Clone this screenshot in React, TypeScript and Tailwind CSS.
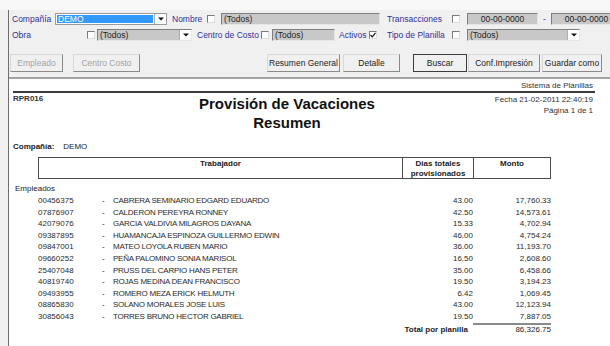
import React from "react";

const rows = [
  { code: "00456375", name: "CABRERA SEMINARIO EDGARD EDUARDO", days: "43.00", monto: "17,760.33" },
  { code: "07876907", name: "CALDERON PEREYRA RONNEY", days: "42.50", monto: "14,573.61" },
  { code: "42079076", name: "GARCIA VALDIVIA MILAGROS DAYANA", days: "15.33", monto: "4,702.94" },
  { code: "09387895", name: "HUAMANCAJA ESPINOZA GUILLERMO EDWIN", days: "46.00", monto: "4,754.24" },
  { code: "09847001", name: "MATEO LOYOLA RUBEN MARIO", days: "36.00", monto: "11,193.70" },
  { code: "09660252", name: "PEÑA PALOMINO SONIA MARISOL", days: "16.50", monto: "2,608.60" },
  { code: "25407048", name: "PRUSS DEL CARPIO HANS PETER", days: "35.00", monto: "6,458.66" },
  { code: "40819740", name: "ROJAS MEDINA DEAN FRANCISCO", days: "19.50", monto: "3,194.23" },
  { code: "09493955", name: "ROMERO MEZA ERICK HELMUTH", days: "6.42", monto: "1,069.45" },
  { code: "08865830", name: "SOLANO MORALES JOSE LUIS", days: "43.00", monto: "12,123.94" },
  { code: "30856043", name: "TORRES BRUNO HECTOR GABRIEL", days: "19.50", monto: "7,887.05" },
];

function Check({ checked = false }: { checked?: boolean }) {
  return (
    <span className="w-[8px] h-[8px] shrink-0 bg-white border border-t-[#7a7a7a] border-l-[#7a7a7a] border-b-[#dcdcdc] border-r-[#dcdcdc] flex items-center justify-center">
      {checked && (
        <svg width="6" height="6" viewBox="0 0 6 6">
          <path d="M0.5 3 L2.3 4.8 L5.5 0.8" stroke="#111" strokeWidth="1.2" fill="none" />
        </svg>
      )}
    </span>
  );
}

function Arrow() {
  return (
    <span className="w-[12px] h-full shrink-0 bg-white border-l border-[#b0b0b0] flex items-center justify-center">
      <svg width="6" height="4" viewBox="0 0 6 4">
        <path d="M0 0.5 H6 L3 3.5 Z" fill="#111" />
      </svg>
    </span>
  );
}

function Field({ text, className, center = false }: { text: string; className: string; center?: boolean }) {
  return (
    <span
      className={`h-full shrink-0 bg-[#c8c8c8] border border-t-[#7e7e7e] border-l-[#7e7e7e] border-b-[#e6e6e6] border-r-[#e6e6e6] text-[#222] flex items-center px-[2px] ${center ? "justify-center" : ""} ${className}`}
    >
      {text}
    </span>
  );
}

function Btn({ label, className, disabled = false, strong = false }: { label: string; className: string; disabled?: boolean; strong?: boolean }) {
  return (
    <span
      className={`h-full shrink-0 flex items-center justify-center bg-[#f0f0f0] border ${
        strong ? "border-[#3c3c3c]" : "border-t-[#d8d8d8] border-l-[#d8d8d8] border-b-[#8a8a8a] border-r-[#8a8a8a]"
      } ${disabled ? "text-[#a3a3a3]" : "text-[#222]"} ${className}`}
    >
      {label}
    </span>
  );
}

export default function App() {
  const lbl = "text-[#30309a] shrink-0";
  return (
    <div
      className="w-[610px] h-[346px] overflow-hidden bg-[#f0f0f0] flex flex-col"
      style={{ fontFamily: '"Liberation Sans", Arial, sans-serif' }}
    >
      <div className="h-[10px] bg-[#f8f8f8] shrink-0" />
      <div className="ml-[8px] border-l border-[#6e6e6e] flex-1 flex flex-col text-[8.5px] leading-none">
        {/* fila 1 */}
        <div className="mt-[3px] h-[12px] flex items-center">
          <span className={`${lbl} w-[46px] pl-[3px]`}>Compañía</span>
          <span className="w-[112px] h-full shrink-0 flex bg-white border border-[#9a9a9a]">
            <span className="flex-1 m-[1px] bg-[#3399ff] text-white flex items-center px-[1px]">DEMO</span>
            <Arrow />
          </span>
          <span className={`${lbl} ml-[5px] w-[35px]`}>Nombre</span>
          <Check />
          <Field text="(Todos)" className="ml-[6px] w-[159px]" />
          <span className={`${lbl} ml-[7px] w-[65px]`}>Transacciones</span>
          <Check />
          <Field text="00-00-0000" className="ml-[7px] w-[71px]" center />
          <span className="w-[13px] shrink-0 text-center text-[#30309a]">-</span>
          <Field text="00-00-0000" className="w-[71px]" center />
        </div>
        {/* fila 2 */}
        <div className="mt-[4px] h-[12px] flex items-center">
          <span className={`${lbl} w-[78px] pl-[3px]`}>Obra</span>
          <Check />
          <span className="ml-[2px] w-[95px] h-full shrink-0 flex bg-[#c8c8c8] border border-t-[#7e7e7e] border-l-[#7e7e7e] border-b-[#e6e6e6] border-r-[#e6e6e6]">
            <span className="flex-1 flex items-center px-[2px] text-[#222]">(Todos)</span>
            <Arrow />
          </span>
          <span className={`${lbl} ml-[5px] w-[64px]`}>Centro de Costo</span>
          <Check />
          <Field text="(Todos)" className="ml-[3px] w-[63px]" />
          <span className={`${lbl} ml-[4px] w-[30px]`}>Activos</span>
          <Check checked />
          <span className={`${lbl} ml-[10px] w-[65px]`}>Tipo de Planilla</span>
          <Check />
          <span className="ml-[7px] w-[113px] h-full shrink-0 flex bg-[#c8c8c8] border border-t-[#7e7e7e] border-l-[#7e7e7e] border-b-[#e6e6e6] border-r-[#e6e6e6]">
            <span className="flex-1 flex items-center px-[2px] text-[#222]">(Todos)</span>
            <Arrow />
          </span>
        </div>
        {/* botones */}
        <div className="mt-[13px] h-[18px] flex items-center">
          <Btn label="Empleado" className="ml-[1px] w-[53px]" disabled />
          <Btn label="Centro Costo" className="ml-[10px] w-[67px]" disabled />
          <Btn label="Resumen General" className="ml-[127px] w-[73px]" />
          <Btn label="Detalle" className="ml-[3px] w-[57px]" />
          <Btn label="Buscar" className="ml-[13px] w-[54px]" strong />
          <Btn label="Conf.Impresión" className="ml-[1px] w-[72px]" />
          <Btn label="Guardar como" className="ml-[2px] w-[60px]" />
        </div>

        {/* reporte */}
        <div className="mt-[5px] flex-1 bg-white border-t-2 border-[#a4a4a4] text-[8px] text-[#222]">
          <div className="pt-[1px] h-[12px] leading-[11px] text-right pr-[17px] text-[#333]">Sistema de Planillas</div>
          <div className="ml-[4px] mr-[15px] h-[2px] bg-[#3a3a3a]" />
          <div className="mt-[1px] flex">
            <div className="w-[178px] pl-[4px] leading-[10px] font-bold text-[#333]">RPR016</div>
            <div className="w-[200px] text-center text-[15px] leading-[19px] font-bold text-[#111]">
              <div>Provisión de Vacaciones</div>
              <div>Resumen</div>
            </div>
            <div className="flex-1 text-right pr-[17px] leading-[10px] text-[#333]">
              <div className="pt-[1px]">Fecha 21-02-2011 22:40:19</div>
              <div className="mt-[1px]">Página 1 de 1</div>
            </div>
          </div>
          <div className="mt-[10px] h-[10px] leading-[10px] flex pl-[4px]">
            <span className="font-bold">Compañía:</span>
            <span className="ml-[9px]">DEMO</span>
          </div>
          <div className="mt-[5px] ml-[29px] w-[513px] h-[22px] border border-[#4a4a4a] flex font-bold leading-[10px]">
            <div className="w-[364px] border-r border-[#4a4a4a] text-center pt-[1px]">Trabajador</div>
            <div className="w-[71px] border-r border-[#4a4a4a] text-center pt-[1px]">
              <div>Dias totales</div>
              <div>provisionados</div>
            </div>
            <div className="flex-1 text-center pt-[1px]">Monto</div>
          </div>
          <div className="mt-[5px] pl-[6px] leading-[10px]">Empleados</div>
          <div className="mt-[1px]">
            {rows.map((r) => (
              <div key={r.code} className="ml-[29px] h-[11.6px] leading-[11.6px] flex text-[#2a2a2a]">
                <span className="w-[64px] shrink-0">{r.code}</span>
                <span className="w-[11px] shrink-0">-</span>
                <span className="w-[289px] shrink-0 tracking-[-0.25px] whitespace-nowrap">{r.name}</span>
                <span className="w-[71px] shrink-0 text-right">{r.days}</span>
                <span className="w-[78px] shrink-0 text-right">{r.monto}</span>
              </div>
            ))}
            <div className="ml-[29px] h-[13px] flex">
              <span className="w-[435px] shrink-0 text-right pr-[5px] pt-[2px] leading-[10px] font-bold">Total por planilla</span>
              <span className="w-[78px] shrink-0 text-right border-t-2 border-[#8a8a8a] leading-[10px]">86,326.75</span>
            </div>
          </div>
        </div>
      </div>
    </div>
  );
}
